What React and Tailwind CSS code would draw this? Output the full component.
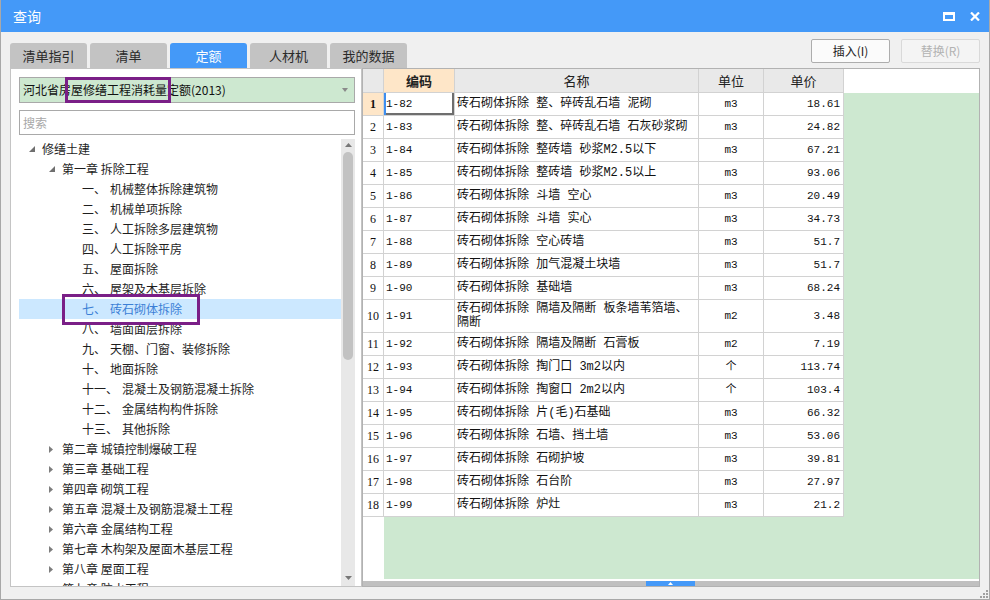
import React from 'react';

const cjk = "font-['Noto_Sans_CJK_SC',sans-serif]";
const mono = "font-['Liberation_Mono','Noto_Sans_CJK_SC',monospace]";
const serif = "font-['Liberation_Serif',serif]";

const tabs = ['清单指引', '清单', '定额', '人材机', '我的数据'];

const tree = [
  { l: 0, t: '修缮土建', a: 'open' },
  { l: 1, t: '第一章 拆除工程', a: 'open' },
  { l: 2, p: '一、', t: '机械整体拆除建筑物' },
  { l: 2, p: '二、', t: '机械单项拆除' },
  { l: 2, p: '三、', t: '人工拆除多层建筑物' },
  { l: 2, p: '四、', t: '人工拆除平房' },
  { l: 2, p: '五、', t: '屋面拆除' },
  { l: 2, p: '六、', t: '屋架及木基层拆除' },
  { l: 2, p: '七、', t: '砖石砌体拆除', sel: true },
  { l: 2, p: '八、', t: '墙面面层拆除' },
  { l: 2, p: '九、', t: '天棚、门窗、装修拆除' },
  { l: 2, p: '十、', t: '地面拆除' },
  { l: 2, p: '十一、', t: '混凝土及钢筋混凝土拆除' },
  { l: 2, p: '十二、', t: '金属结构构件拆除' },
  { l: 2, p: '十三、', t: '其他拆除' },
  { l: 1, t: '第二章 城镇控制爆破工程', a: 'closed' },
  { l: 1, t: '第三章 基础工程', a: 'closed' },
  { l: 1, t: '第四章 砌筑工程', a: 'closed' },
  { l: 1, t: '第五章 混凝土及钢筋混凝土工程', a: 'closed' },
  { l: 1, t: '第六章 金属结构工程', a: 'closed' },
  { l: 1, t: '第七章 木构架及屋面木基层工程', a: 'closed' },
  { l: 1, t: '第八章 屋面工程', a: 'closed' },
  { l: 1, t: '第九章 防水工程', a: 'closed' },
];

const levelPad = ['pl-[10px]', 'pl-[30px]', 'pl-[63px]'];

const rows = [
  ['1-82', '砖石砌体拆除 整、碎砖乱石墙 泥砌', 'm3', '18.61'],
  ['1-83', '砖石砌体拆除 整、碎砖乱石墙 石灰砂浆砌', 'm3', '24.82'],
  ['1-84', '砖石砌体拆除 整砖墙 砂浆M2.5以下', 'm3', '67.21'],
  ['1-85', '砖石砌体拆除 整砖墙 砂浆M2.5以上', 'm3', '93.06'],
  ['1-86', '砖石砌体拆除 斗墙 空心', 'm3', '20.49'],
  ['1-87', '砖石砌体拆除 斗墙 实心', 'm3', '34.73'],
  ['1-88', '砖石砌体拆除 空心砖墙', 'm3', '51.7'],
  ['1-89', '砖石砌体拆除 加气混凝土块墙', 'm3', '51.7'],
  ['1-90', '砖石砌体拆除 基础墙', 'm3', '68.24'],
  ['1-91', ['砖石砌体拆除 隔墙及隔断 板条墙苇箔墙、', '隔断'], 'm2', '3.48'],
  ['1-92', '砖石砌体拆除 隔墙及隔断 石膏板', 'm2', '7.19'],
  ['1-93', '砖石砌体拆除 掏门口 3m2以内', '个', '113.74'],
  ['1-94', '砖石砌体拆除 掏窗口 2m2以内', '个', '103.4'],
  ['1-95', '砖石砌体拆除 片(毛)石基础', 'm3', '66.32'],
  ['1-96', '砖石砌体拆除 石墙、挡土墙', 'm3', '53.06'],
  ['1-97', '砖石砌体拆除 石砌护坡', 'm3', '39.81'],
  ['1-98', '砖石砌体拆除 石台阶', 'm3', '27.97'],
  ['1-99', '砖石砌体拆除 炉灶', 'm3', '21.2'],
];

function Arrow({ kind }) {
  if (kind === 'open') {
    return (
      <svg width="6" height="6" viewBox="0 0 6 6">
        <polygon points="6,0 6,6 0,6" fill="#6f6f6f" />
      </svg>
    );
  }
  return (
    <svg width="4" height="7" viewBox="0 0 4 7">
      <polygon points="0,0 4,3.5 0,7" fill="#7d7d7d" />
    </svg>
  );
}

function TreeRow({ item }) {
  return (
    <div
      className={`h-[20px] flex items-center shrink-0 whitespace-nowrap ${levelPad[item.l]} ${
        item.sel ? 'bg-[#cce8ff] text-[#3b7fd6]' : 'text-[#1e1e1e]'
      }`}
    >
      {item.l < 2 ? (
        <>
          <span className="w-[13px] flex items-center">
            <Arrow kind={item.a} />
          </span>
          <span>{item.t}</span>
        </>
      ) : (
        <>
          <span>{item.p}</span>
          <span className="ml-[4px]">{item.t}</span>
        </>
      )}
    </div>
  );
}

function LeftPanel() {
  return (
    <div className="relative w-[352px] h-full border border-[#c4c4c4] bg-white pl-[8px] pr-[6px] pt-[8px] flex flex-col">
      <div className="h-[26px] border border-[#a9a9a9] bg-[#cde8d0] flex items-center justify-between pl-[3px] pr-[6px]">
        <span className={`${cjk} text-[12px] text-[#111]`}>河北省房屋修缮工程消耗量定额(2013)</span>
        <svg width="6" height="4" viewBox="0 0 6 4">
          <polygon points="0,0 6,0 3,4" fill="#8a8a8a" />
        </svg>
      </div>
      <div className="mt-[7px] h-[25px] border border-[#a9a9a9] bg-white flex items-center pl-[3px]">
        <span className={`${cjk} text-[12px] text-[#a8a8a8]`}>搜索</span>
      </div>
      <div className="mt-[4px] flex-1 flex min-h-0">
        <div className={`flex-1 overflow-hidden flex flex-col ${cjk} text-[12px]`}>
          {tree.map((it, i) => (
            <TreeRow key={i} item={it} />
          ))}
        </div>
        <div className="w-[14px] bg-[#e8e8e8] flex flex-col items-center">
          <div className="h-[12px] flex items-center justify-center">
            <svg width="7" height="4" viewBox="0 0 7 4">
              <polygon points="0,4 7,4 3.5,0" fill="#777" />
            </svg>
          </div>
          <div className="mt-[1px] h-[208px] w-[10px] rounded-[5px] bg-[#c2c2c2]" />
          <div className="flex-1" />
          <div className="h-[10px] flex items-start justify-center">
            <svg width="7" height="4" viewBox="0 0 7 4">
              <polygon points="0,0 7,0 3.5,4" fill="#777" />
            </svg>
          </div>
        </div>
      </div>
      <div className="absolute left-[54px] top-[8px] w-[106px] h-[26px] border-[3px] border-[#7a1f87]" />
      <div className="absolute left-[51px] top-[225px] w-[138px] h-[31px] border-[3px] border-[#7a1f87]" />
    </div>
  );
}

function Grid() {
  const cell = 'border-r border-b border-[#d2d2d2] flex items-center';
  return (
    <div className="w-[618px] h-full border border-[#b2b2b2] bg-white flex flex-col">
      <div className="flex-1 flex min-h-0">
        <div className="w-[481px] flex flex-col">
          <div className={`flex h-[24px] bg-[#e9e9e9] ${cjk} text-[13px] text-[#222]`}>
            <div className={`${cell} w-[21px]`} />
            <div className={`${cell} w-[71px] justify-center bg-[#fee6c8] font-bold`}>编码</div>
            <div className={`${cell} w-[244px] justify-center`}>名称</div>
            <div className={`${cell} w-[65px] justify-center`}>单位</div>
            <div className={`${cell} w-[80px] justify-center`}>单价</div>
          </div>
          {rows.map((r, i) => {
            const two = Array.isArray(r[1]);
            return (
              <div key={i} className={`flex ${two ? 'h-[33px]' : 'h-[23px]'} text-[#111]`}>
                <div
                  className={`${cell} w-[21px] justify-center ${serif} text-[12px] ${
                    i === 0 ? 'bg-[#fee6c8] font-bold' : ''
                  }`}
                >
                  {i + 1}
                </div>
                <div
                  className={`${cell} w-[71px] pl-[2px] ${mono} text-[11px] ${
                    i === 0 ? 'shadow-[inset_2px_0_0_#3d8ef0,inset_-2px_-2px_0_#6e6e6e]' : ''
                  }`}
                >
                  {r[0]}
                </div>
                <div className={`${cell} w-[244px] pl-[2px] ${mono} text-[12px] leading-[14px] whitespace-nowrap`}>
                  {two ? (
                    <div>
                      {r[1][0]}
                      <br />
                      {r[1][1]}
                    </div>
                  ) : (
                    r[1]
                  )}
                </div>
                <div className={`${cell} w-[65px] justify-center ${mono} text-[11px]`}>{r[2]}</div>
                <div className={`${cell} w-[80px] justify-end pr-[3px] ${mono} text-[11px]`}>{r[3]}</div>
              </div>
            );
          })}
          <div className="flex-1 flex">
            <div className="w-[21px] bg-white" />
            <div className="flex-1 bg-[#cde8d0]" />
          </div>
        </div>
        <div className="flex-1 flex flex-col">
          <div className="h-[24px] bg-white" />
          <div className="flex-1 bg-[#cde8d0]" />
        </div>
      </div>
      <div className="h-[2px] bg-white" />
      <div className="h-[5px] bg-[#c0c0c0] flex">
        <div className="w-[283px]" />
        <div className="w-[49px] bg-[#4499f8] flex items-center justify-center">
          <svg width="5" height="3" viewBox="0 0 5 3">
            <polygon points="0,3 5,3 2.5,0" fill="#fff" />
          </svg>
        </div>
      </div>
    </div>
  );
}

export default function App() {
  return (
    <div className={`w-[990px] h-[600px] bg-[#f0f0f0] border-x border-b border-[#a8a8a8] flex flex-col overflow-hidden ${cjk}`}>
      <div className="h-[32px] shrink-0 bg-[#4499f8] flex items-center justify-between pl-[12px] pr-[9px]">
        <span className="text-[14px] text-white">查询</span>
        <div className="flex items-center gap-[15px]">
          <svg width="12" height="9" viewBox="0 0 12 9">
            <rect x="1" y="1.5" width="10" height="6.5" fill="none" stroke="#fff" strokeWidth="2" />
            <rect x="0" y="0" width="12" height="3" fill="#fff" />
          </svg>
          <svg width="10" height="9" viewBox="0 0 10 9">
            <path d="M1 0.5 L9 8.5 M9 0.5 L1 8.5" stroke="#fff" strokeWidth="2.2" />
          </svg>
        </div>
      </div>
      <div className="pl-[9px] pr-[9px] flex flex-col">
        <div className="h-[36px] flex justify-between">
          <div className="flex items-end gap-[3px]">
            {tabs.map((t) => (
              <div
                key={t}
                className={`w-[77px] h-[25px] rounded-t-[3px] flex items-center justify-center text-[13px] ${
                  t === '定额' ? 'bg-[#4499f8] text-white' : 'bg-[#c3c3c3] text-[#2a2a2a]'
                }`}
              >
                {t}
              </div>
            ))}
          </div>
          <div className="flex gap-[11px] mt-[7px]">
            <div className="w-[79px] h-[24px] rounded-[2px] border border-[#adadad] bg-[#fbfbfb] flex items-center justify-center text-[12px] text-[#222]">
              插入(I)
            </div>
            <div className="w-[79px] h-[24px] rounded-[2px] border border-[#d9d9d9] bg-[#f4f4f4] flex items-center justify-center text-[12px] text-[#b2b2b2]">
              替换(R)
            </div>
          </div>
        </div>
        <div className="h-[519px] flex">
          <LeftPanel />
          <Grid />
        </div>
      </div>
      <div className="flex-1 flex justify-end items-end pr-[1px] pb-[1px]">
        <svg width="8" height="8" viewBox="0 0 8 8">
          <rect x="6" y="0" width="2" height="2" fill="#a0a0a0" />
          <rect x="3" y="3" width="2" height="2" fill="#a0a0a0" />
          <rect x="6" y="3" width="2" height="2" fill="#a0a0a0" />
          <rect x="0" y="6" width="2" height="2" fill="#a0a0a0" />
          <rect x="3" y="6" width="2" height="2" fill="#a0a0a0" />
          <rect x="6" y="6" width="2" height="2" fill="#a0a0a0" />
        </svg>
      </div>
    </div>
  );
}
